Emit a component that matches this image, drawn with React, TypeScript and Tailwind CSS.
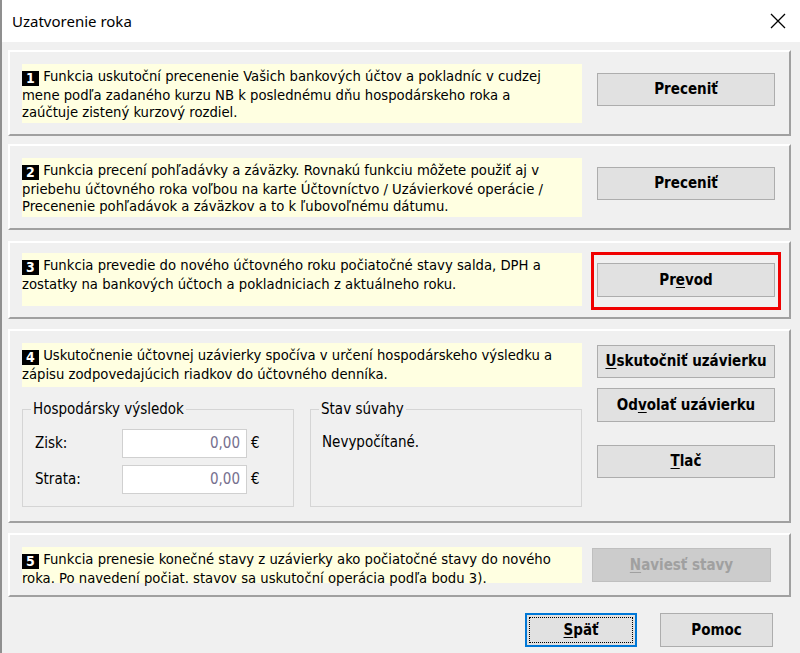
import React from 'react'

const font = { fontFamily: '"DejaVu Sans Condensed", "DejaVu Sans", sans-serif' }

function Badge({ n }: { n: number }) {
  return (
    <span className="inline-flex items-center justify-center w-[17px] h-[15px] bg-black text-white font-bold text-[14px] leading-none align-[-2px]">
      {n}
    </span>
  )
}

function Btn({ children, className = '' }: { children: React.ReactNode; className?: string }) {
  return (
    <button className={`flex items-center justify-center bg-[#e1e1e1] border border-[#adadad] font-bold text-[15px] text-black ${className}`}>
      {children}
    </button>
  )
}

function Panel({ className = '', children }: { className?: string; children: React.ReactNode }) {
  return (
    <div className={`flex items-start w-[783px] pl-[12px] border-2 border-t-white border-l-white border-r-[#a0a0a0] border-b-[#a0a0a0] ${className}`}>
      {children}
    </div>
  )
}

function Note({ className = '', children }: { className?: string; children: React.ReactNode }) {
  return (
    <div className={`w-[560px] bg-[#ffffe1] pt-[3px] text-[14.7px] leading-[17px] text-black whitespace-nowrap ${className}`}>
      {children}
    </div>
  )
}

export default function App() {
  return (
    <div className="w-[800px] h-[653px] bg-[#f0f0f0] border-l-2 border-[#8f8f8f] flex flex-col overflow-hidden" style={font}>
      {/* title bar */}
      <div className="h-[42px] bg-white flex items-center justify-between pl-[10px] pr-[14px] shrink-0">
        <span className="text-[15px] text-black" style={{ fontFamily: '"Noto Sans", sans-serif' }}>Uzatvorenie roka</span>
        <svg width="16" height="16" viewBox="0 0 16 16" className="text-black">
          <path d="M1 1 L15 15 M15 1 L1 15" stroke="currentColor" strokeWidth="1.3" fill="none" />
        </svg>
      </div>

      <div className="flex flex-col pl-[6px] pt-[8px]">
        {/* 1 */}
        <Panel className="h-[86px]">
          <Note className="mt-[12px] h-[59px]">
            <Badge n={1} /> Funkcia uskutoční precenenie Vašich bankových účtov a pokladníc v cudzej<br />
            mene podľa zadaného kurzu NB k poslednému dňu hospodárskeho roka a<br />
            zaúčtuje zistený kurzový rozdiel.
          </Note>
          <Btn className="ml-[15px] mt-[21px] w-[178px] h-[33px]">Preceniť</Btn>
        </Panel>

        {/* 2 */}
        <Panel className="h-[86px] mt-[8px]">
          <Note className="mt-[12px] h-[59px]">
            <Badge n={2} /> Funkcia precení pohľadávky a záväzky. Rovnakú funkciu môžete použiť aj v<br />
            priebehu účtovného roka voľbou na karte Účtovníctvo / Uzávierkové operácie /<br />
            Precenenie pohľadávok a záväzkov a to k ľubovoľnému dátumu.
          </Note>
          <Btn className="ml-[15px] mt-[21px] w-[178px] h-[33px]">Preceniť</Btn>
        </Panel>

        {/* 3 */}
        <Panel className="h-[78px] mt-[11px]">
          <Note className="mt-[10px] h-[53px]">
            <Badge n={3} /> Funkcia prevedie do nového účtovného roku počiatočné stavy salda, DPH a<br />
            zostatky na bankových účtoch a pokladniciach z aktuálneho roku.
          </Note>
          <div className="ml-[9px] mt-[9px] border-[3px] border-[#f00000] px-[3px] pt-[8px] pb-[10px]">
            <Btn className="w-[178px] h-[34px]">
              Pr<span className="underline underline-offset-2">e</span>vod
            </Btn>
          </div>
        </Panel>

        {/* 4 */}
        <Panel className="h-[194px] mt-[10px]">
          <div className="flex flex-col w-[560px]">
            <Note className="mt-[12px] h-[44px]">
              <Badge n={4} /> Uskutočnenie účtovnej uzávierky spočíva v určení hospodárskeho výsledku a<br />
              zápisu zodpovedajúcich riadkov do účtovného denníka.
            </Note>
            <div className="flex gap-[16px] mt-[22px] text-[15px] text-black">
              <div className="relative w-[272px] h-[98px] border border-[#d5d5d5] pl-[12px] pt-[19px] flex flex-col gap-[7px]">
                <span className="absolute -top-[10px] left-[8px] px-[2px] bg-[#f0f0f0] leading-[18px]">Hospodársky výsledok</span>
                {['Zisk:', 'Strata:'].map((l) => (
                  <div key={l} className="flex items-center h-[29px]">
                    <span className="w-[87px]">{l}</span>
                    <div className="w-[125px] h-[29px] bg-white border border-[#d0d0d0] flex items-center justify-end pr-[6px] text-[#76708e]">0,00</div>
                    <span className="ml-[4px]">€</span>
                  </div>
                ))}
              </div>
              <div className="relative w-[272px] h-[98px] border border-[#d5d5d5] pl-[11px] pt-[21px]">
                <span className="absolute -top-[10px] left-[8px] px-[2px] bg-[#f0f0f0] leading-[18px]">Stav súvahy</span>
                <span>Nevypočítané.</span>
              </div>
            </div>
          </div>
          <div className="flex flex-col ml-[15px]">
            <Btn className="mt-[14px] w-[178px] h-[33px]">
              <span className="underline underline-offset-2">U</span>skutočniť uzávierku
            </Btn>
            <Btn className="mt-[10px] w-[178px] h-[34px]">
              Od<span className="underline underline-offset-2">v</span>olať uzávierku
            </Btn>
            <Btn className="mt-[23px] w-[178px] h-[33px]">
              <span className="underline underline-offset-2">T</span>lač
            </Btn>
          </div>
        </Panel>

        {/* 5 */}
        <Panel className="h-[64px] mt-[10px]">
          <Note className="mt-[12px] h-[36px]">
            <Badge n={5} /> Funkcia prenesie konečné stavy z uzávierky ako počiatočné stavy do nového<br />
            roka. Po navedení počiat. stavov sa uskutoční operácia podľa bodu 3).
          </Note>
          <button className="ml-[10px] mt-[13px] w-[179px] h-[34px] flex items-center justify-center bg-[#cccccc] border border-[#bfbfbf] font-bold text-[15px] text-[#a0a0a0]">
            <span className="underline underline-offset-2">N</span>aviesť stavy
          </button>
        </Panel>
      </div>

      {/* bottom buttons */}
      <div className="flex justify-end gap-[23px] pr-[27px] mt-[16px]">
        <button className="w-[112px] h-[34px] border-2 border-[#0078d7] bg-[#e1e1e1] p-[2px]">
          <div className="w-full h-full border border-dotted border-black flex items-center justify-center font-bold text-[15px] text-black">
            <span className="underline underline-offset-2">S</span>päť
          </div>
        </button>
        <Btn className="w-[113px] h-[34px]">Pomoc</Btn>
      </div>
    </div>
  )
}
